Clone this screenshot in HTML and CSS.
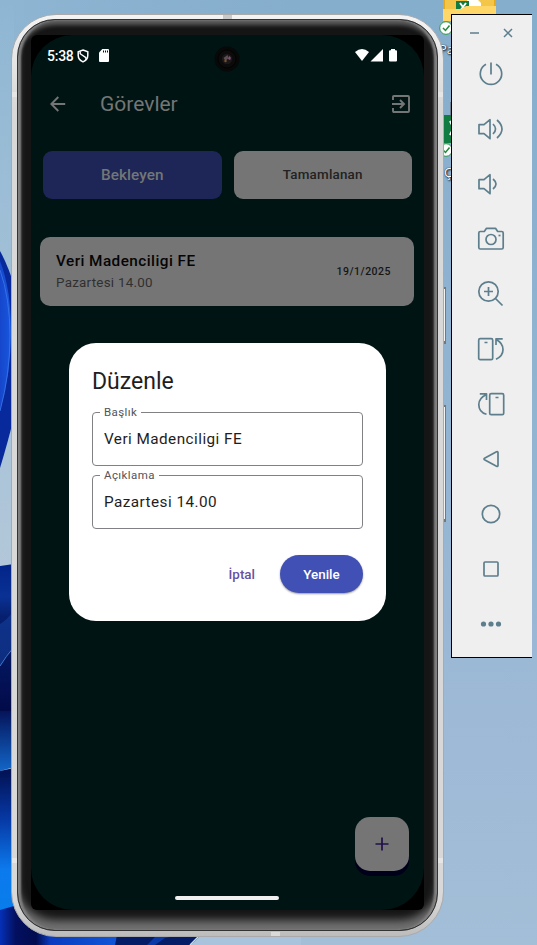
FILE: index.html
```html
<!DOCTYPE html>
<html lang="tr">
<head>
<meta charset="utf-8">
<title>Görevler</title>
<link rel="stylesheet" href="styles.css">
</head>
<body>
<div class="desktop">
  <svg class="wallpaper" width="537" height="945" viewBox="0 0 537 945" aria-hidden="true">
    <defs>
      <linearGradient id="sky" x1="0" y1="0" x2="0" y2="1"><stop offset="0" stop-color="#85adcc"/><stop offset=".5" stop-color="#93b5d3"/><stop offset=".75" stop-color="#9db9d6"/><stop offset="1" stop-color="#a3bed7"/></linearGradient>
      <linearGradient id="skyLeft" x1="0" y1="0" x2="0" y2="1"><stop offset="0" stop-color="#8eb6d3"/><stop offset=".3" stop-color="#9bbdd5"/><stop offset="1" stop-color="#b4c8da"/></linearGradient>
      <linearGradient id="skyTop" x1="0" y1="0" x2="1" y2="0"><stop offset="0" stop-color="#8eb6d3"/><stop offset="1" stop-color="#85adcc"/></linearGradient>
      <linearGradient id="petal" x1="0" y1="0" x2="1" y2="0"><stop offset="0" stop-color="#1546cb"/><stop offset="1" stop-color="#1858df"/></linearGradient>
      <linearGradient id="low" x1="0" y1="0" x2="0" y2="1"><stop offset="0" stop-color="#02248a"/><stop offset=".22" stop-color="#0a3193"/><stop offset=".35" stop-color="#06206f"/><stop offset="1" stop-color="#020a48"/></linearGradient>
      <linearGradient id="mid" x1="0" y1="0" x2="0" y2="1"><stop offset="0" stop-color="#05145a"/><stop offset="1" stop-color="#1266c8"/></linearGradient>
      <linearGradient id="glow" x1="0" y1="0" x2="0" y2="1"><stop offset="0" stop-color="#021050"/><stop offset=".35" stop-color="#0638a4"/><stop offset=".7" stop-color="#0c7aed"/><stop offset="1" stop-color="#087dea"/></linearGradient>
      <linearGradient id="foot" x1="0" y1="0" x2="1" y2="0"><stop offset="0" stop-color="#0530b8"/><stop offset=".13" stop-color="#03105f"/><stop offset=".3" stop-color="#020b4e"/><stop offset=".42" stop-color="#0a3cc0"/><stop offset="1" stop-color="#1157d8"/></linearGradient>
    </defs>
    <path fill="url(#sky)" d="M0 0h537v945H0z"/>
    <path fill="url(#skyTop)" d="M0 0h300v50H0z"/>
    <path fill="url(#skyLeft)" d="M0 0h14v600H0z"/>
    <path fill="#07299c" d="M0 251q8 14 16 40v118Q8 442 0 468z"/>
    <path fill="url(#petal)" d="M0 261q11 28 11 70t-11 80z"/>
    <path fill="none" stroke="#3c78e8" stroke-width=".8" d="M0 270q10 28 10 66T0 411"/>
    <path fill="url(#low)" d="M0 566l14-2v150H0z"/>
    <path fill="#1b50b5" d="M0 624q7-4 14-14v38q-8 6-14 18z" opacity=".4"/>
    <path fill="none" stroke="#3f79d2" d="M0 666q6-10 14-19"/>
    <path fill="url(#mid)" d="M0 711h14v56L0 771z"/>
    <path fill="url(#glow)" d="M0 771l14-3v145H0z"/>
    <path fill="url(#foot)" d="M0 910l14-4 15 22h91v17H0z"/>
    <path fill="#041d66" d="M118 930h95l-23 15h-75z"/><path fill="#0b3aa8" d="M162 930h43l-40 8-10 7h-8z"/>
    <path fill="none" stroke="#c8def1" stroke-width="1.500" d="M200 935l-10 10"/>
    <path fill="#a9c3dc" d="M201 935h100v10H191z"/>
  </svg>

  <div class="shortcuts" aria-hidden="true">
    <svg width="60" height="190" viewBox="0 0 60 190">
      <path fill="#e5a91c" d="M6 0h53v20H6z"/><path fill="#f3c64a" d="M8 0h49v12H8z"/>
      <path fill="#fff" d="M30 0h11l3 3v10H30z"/><path fill="#107c41" d="M19 1h13v12H19z"/>
      <path stroke="#fff" stroke-width="2" d="M23 3l6 8m0-8l-6 8"/>
      <path fill="#ffd768" d="M6 9h18l5-3h30v15H6z"/>
      <path fill="#fff" d="M14 102h8v15h-8z" stroke="#555"/>
      <circle cx="9" cy="28" r="6.300" fill="#fff" stroke="#2a9a45"/>
      <path fill="none" stroke="#218a3b" stroke-width="1.500" d="M6 28l2.500 2.500 4-5"/>
      <path fill="#107c41" d="M7 115h15v28H7z"/><path stroke="#fff" stroke-width="2" d="M13 121l7 14m0-14l-7 14"/>
      <circle cx="9" cy="150" r="6.300" fill="#fff" stroke="#2a9a45"/><path fill="none" stroke="#218a3b" stroke-width="1.500" d="M6 150l2.500 2.500 4-5"/>
    </svg>
    <span class="shortcut-name first">Pa</span>
    <span class="shortcut-name second">Ç</span>
    <i class="edge upper"></i><i class="edge lower"></i>
  </div>

  <main class="phone">
    <div class="rim"><div class="bezel">
      <div class="screen">
        <header class="status">
          <span class="clock">5:38</span>
          <svg class="shield" width="12" height="14" viewBox="0 0 12 14"><path fill="none" stroke="#fff" stroke-width="1.500" d="M6 1l4.800 1.800v3.500c0 3-1.700 5.300-4.800 6.600C2.900 11.600 1.200 9.300 1.200 6.300V2.800z"/><path stroke="#fff" stroke-width="1.400" fill="none" d="M3.200 2.500v2.200l5.700 4v2"/></svg>
          <svg class="sd" width="10" height="13" viewBox="0 0 10 13"><path fill="#fff" d="M3.300 0H9q1 0 1 1v11q0 1-1 1H1q-1 0-1-1V3.500z"/><path stroke="#001413" stroke-width="1" d="M4.500 1.500v2m2-2v2m2-2v2"/></svg>
          <svg class="signals" width="42" height="13" viewBox="0 0 42 13" fill="#fff"><path d="M0 3q7-5.800 14 0L7 12z"/><path d="M15.500 12.500L28 0v12.500zM36 0h4v1.200h1q1 0 1 1v9.300q0 1-1 1h-6q-1 0-1-1V2.200q0-1 1-1h1z"/></svg>
        </header>
        <div class="camera"><svg width="26" height="26" viewBox="0 0 26 26"><circle cx="13" cy="13" r="12.500" fill="#070808"/><circle cx="13" cy="13" r="9" fill="#0b0b0c" stroke="#030303"/><circle cx="13" cy="13" r="5.200" fill="#1c1618"/><path d="M9.500 12l4-3 1 3-3 3z" fill="#5a5054"/><path d="M15 10q3 1 1 4l-2-1z" fill="#80506f"/><circle cx="11.500" cy="15" r="1.200" fill="#735629"/></svg></div>

        <nav class="appbar">
          <svg width="16" height="16" viewBox="0 0 16 16"><path fill="none" stroke="#747676" stroke-width="1.900" d="M15.200 8H1.500M8.300 1L1.300 8l7 7"/></svg>
          <h1>Görevler</h1>
          <svg width="18" height="18" viewBox="0 0 18 18" fill="none" stroke="#747676" stroke-width="1.900"><path d="M1 5V2q0-1 1-1h14q1 0 1 1v14q0 1-1 1H2q-1 0-1-1v-3M0 9h11.500M8 5l4 4-4 4"/></svg>
        </nav>
        <div class="tabs">
          <button class="tab active">Bekleyen</button>
          <button class="tab">Tamamlanan</button>
        </div>
        <article class="task">
          <div><h2>Veri Madenciligi FE</h2><p>Pazartesi 14.00</p></div>
          <time>19/1/2025</time>
        </article>

        <div class="overlay">
          <section class="dialog">
            <h2>Düzenle</h2>
            <fieldset class="field"><legend>Başlık</legend><div>Veri Madenciligi FE</div></fieldset>
            <fieldset class="field"><legend>Açıklama</legend><div>Pazartesi 14.00</div></fieldset>
            <div class="actions"><button class="cancel">İptal</button><button class="confirm">Yenile</button></div>
          </section>
        </div>
        <button class="fab" aria-label="Ekle"><svg width="14" height="14" viewBox="0 0 14 14"><path stroke="#21104b" stroke-width="1.700" d="M7 .5v13M.5 7h13"/></svg></button>
        <div class="handle"></div>
      </div>
    </div></div>
    <i class="band lt"></i><i class="band lb"></i><i class="band rt"></i><i class="band rb"></i><i class="band top"></i><i class="band bottom"></i>
  </main>

  <aside class="toolbar">
    <div class="window-buttons">
      <svg viewBox="0 0 10 10"><path d="M0 5h9"/></svg>
      <svg viewBox="0 0 10 10"><path d="M1 1l8 8m0-8L1 9"/></svg>
    </div>
    <svg viewBox="0 0 30 30"><path d="M10 5.300a10.700 10.700 0 1 0 10 0M15 3.500v12"/></svg>
    <svg viewBox="0 0 30 30"><path d="M3 10.700h5l6-5v19l-6-5H3zM17 10q5 5 0 10M21 6q10 9 0 18"/></svg>
    <svg viewBox="0 0 30 30"><path d="M3 10.700h5l6-5v19l-6-5H3zM17 10q6 5 0 10"/></svg>
    <svg viewBox="0 0 30 30"><path d="M2.800 9q0-1.500 1.500-1.500h4l2.200-3.200h9l2.200 3.200h4q1.500 0 1.500 1.500v14.500q0 1.500-1.500 1.500H4.300q-1.500 0-1.500-1.500z"/><circle cx="15" cy="15.500" r="5"/><path d="M22.500 11.500h2"/></svg>
    <svg viewBox="0 0 30 30"><circle cx="12.500" cy="12.500" r="9.700"/><path d="M12.500 8v9M8 12.500h9M19.500 19.500l7 7"/></svg>
    <svg viewBox="0 0 30 30"><rect x="2.700" y="4.700" width="14" height="21" rx="1.500"/><path d="M8.500 8.500h3M20 25.300q7-3.300 7-9.800 0-6.300-6.700-10M20 11V4.800h6.700"/></svg>
    <svg viewBox="0 0 30 30"><rect x="13.700" y="4.700" width="14" height="21" rx="1.500"/><path d="M19.500 8.500h3M10.500 25.300q-7.700-2-7.700-9.800 0-6.300 7.500-10M3.800 4.800h6.700V11"/></svg>
    <svg viewBox="0 0 30 30"><path d="M8.500 14.300q-1 .7 0 1.400l12 6.500q1.500.7 1.500-.8V8.600q0-1.500-1.500-.8z"/></svg>
    <svg viewBox="0 0 30 30"><circle cx="15" cy="15" r="8.700"/></svg>
    <svg viewBox="0 0 30 30"><rect x="8" y="8" width="14" height="14" rx="1"/></svg>
    <svg viewBox="0 0 30 30"><g fill="#5d7e8c" stroke="none"><circle cx="7.500" cy="15" r="2.600"/><circle cx="15" cy="15" r="2.600"/><circle cx="22.500" cy="15" r="2.600"/></g></svg>
  </aside>
</div>
</body>
</html>
```
FILE: styles.css
```css
* { box-sizing: border-box; }
body { margin: 0; font-family: Roboto, sans-serif; overflow: hidden; }
h1, h2, p { margin: 0; }
button { border: 0; padding: 0; font: inherit; }
svg { display: block; flex: none; }

.desktop { position: relative; width: 537px; height: 945px; display: flex; align-items: flex-start; padding: 14px 0 0 11px; overflow: hidden; }
.wallpaper { position: absolute; left: 0; top: 0; }

.shortcuts { position: absolute; left: 437px; top: 0; width: 60px; height: 530px; }
.shortcut-name { position: absolute; left: 2px; font: 13px/14px "Open Sans", sans-serif; color: #fff; text-shadow: 1px 1px 2px #000, 0 0 1px #000; }
.shortcut-name.first { top: 42px; }
.shortcut-name.second { left: 7px; top: 165px; }
.edge { position: absolute; left: 6px; width: 3px; border: solid #777; border-width: 2px 1px 3px 0; background: #f3f3f3; }
.edge.upper { top: 287px; height: 57px; }
.edge.lower { top: 405px; height: 117px; }

.phone { position: relative; width: 433px; height: 923px; padding: 1px; border-radius: 45px; background: linear-gradient(#f3f3f3, #d8d8d8 10%, #d8d8d8 96%, #bcbcbc); border: 1px solid #aaa; flex: none; }
.rim { height: 100%; margin: 0 4px; padding: 3px 0 4px; }
.bezel { height: 100%; border-radius: 38px; border: 1px solid #333; background: #151515; padding: 15px 12px 20px; box-shadow: inset 3px 0 2px #808080, inset -3px 0 2px #808080, inset 0 5px 4px #5c5c5c, inset 0 -11px 8px -1px #707070; }
.screen { position: relative; display: flex; flex-direction: column; width: 393px; height: 875px; margin-left: 1px; isolation: isolate; }
.screen::before { content: ""; position: absolute; inset: 0; background: #000; border-radius: 6px; z-index: -2; }
.screen::after { content: ""; position: absolute; inset: 0; background: #001413; border-radius: 42px; z-index: -1; }

.band { position: absolute; width: 5px; height: 5px; background: #e6e6e6; }
.lt { left: 0; top: 77px; } .lb { left: 0; top: 843px; }
.rt { right: 0; top: 77px; } .rb { right: 0; top: 843px; }
.top { left: 211px; top: 0; width: 9px; height: 4px; background: #c9c9c9; }
.bottom { left: 259px; bottom: 0; width: 9px; height: 4px; background: #d9d9d9; }

.status { display: flex; align-items: center; height: 41px; padding: 0 27px 0 16px; color: #fff; }
.clock { width: 26px; font-size: 14px; font-weight: 500; letter-spacing: -.25px; white-space: nowrap; }
.shield { margin-left: 4px; }
.sd { margin-left: 10px; }
.signals { margin-left: auto; }
.camera { position: absolute; left: 183px; top: 11px; }

.appbar { display: flex; align-items: center; height: 55px; padding: 0 14px 0 19px; color: #747676; }
.appbar h1 { flex: 1; margin-left: 34px; font-size: 21px; font-weight: 400; line-height: 28px; }
.tabs { display: flex; gap: 12px; padding: 19.500px 12px 0; }
.tab { flex: 1; height: 48px; border-radius: 9px; background: #757575; color: #222; font-size: 13.400px; font-weight: 500; letter-spacing: .2px; }
.tab.active { background: #1d2657; color: #747676; font-size: 15.300px; letter-spacing: .1px; }
.task { display: flex; align-items: center; justify-content: space-between; height: 69px; margin: 38.500px 10px 0 9px; padding: 0 23px 0 16px; background: #757575; border-radius: 10px; }
.task h2 { font-size: 15.300px; line-height: 22px; font-weight: 500; color: #050505; letter-spacing: .45px; }
.task p { font-size: 13.400px; line-height: 21px; color: #303030; letter-spacing: .25px; }
.task time { font-size: 10.500px; font-weight: 500; color: #151515; letter-spacing: .5px; }

.overlay { position: absolute; inset: 0; display: flex; align-items: center; justify-content: center; padding-top: 18px; }
.dialog { width: 317px; height: 278px; padding: 24px 23px 22px; background: #fff; border-radius: 27px; color: #1f1d22; }
.dialog h2 { height: 39px; font-size: 23px; font-weight: 400; line-height: 30px; }
.field { height: 60px; min-width: 0; margin: 0 0 3.500px; padding: 0 11px; border: 1px solid #818084; border-radius: 4px; }
.field legend { height: 13px; margin-left: -4px; padding: 0 4px; font-size: 11.500px; line-height: 13px; color: #555259; letter-spacing: .4px; }
.field div { margin-top: 10px; font-size: 15.300px; line-height: 20px; letter-spacing: .45px; }
.actions { display: flex; justify-content: flex-end; align-items: center; gap: 25px; height: 38px; margin-top: 26px; font-size: 13.400px; font-weight: 500; }
.cancel { background: none; color: #6751a0; }
.confirm { width: 83px; height: 38px; border-radius: 19px; background: #4050b5; color: #fff; box-shadow: 0 1px 2px #0006; }

.fab { position: absolute; right: 15px; bottom: 39px; width: 54px; height: 54px; display: grid; place-items: center; border-radius: 15px; background: #757575; box-shadow: 0 5px 0 #00001b; }
.handle { position: absolute; left: 144px; bottom: 10px; width: 104px; height: 4px; border-radius: 2px; background: #f2eff1; }

.toolbar { position: relative; display: flex; flex-direction: column; align-items: center; width: 81px; height: 644px; margin-left: 7px; padding-right: 2px; background: #efefef; border: solid #000; border-width: 1px 0 1px 1px; flex: none; }
.toolbar svg { width: 30px; height: 30px; margin-bottom: 25px; fill: none; stroke: #5d7e8c; stroke-width: 1.700; stroke-linejoin: round; }
.window-buttons { display: flex; justify-content: space-between; align-items: center; width: 43px; height: 34px; margin-bottom: 10px; }
.window-buttons + svg { margin-top: 0; }
.window-buttons { flex: none; margin-top: 1px; }
.window-buttons { height: 33px; margin-bottom: 10px; }
.toolbar .window-buttons svg { width: 10px; height: 10px; margin: 0; stroke-width: 1.500; }
```
